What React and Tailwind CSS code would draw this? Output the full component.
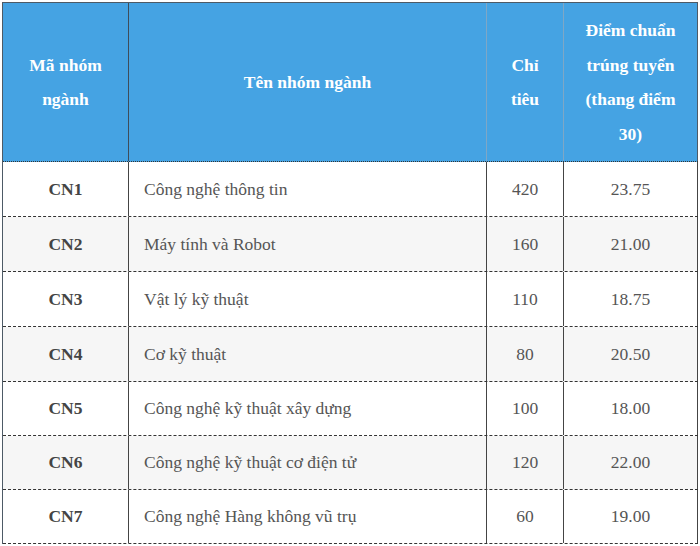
import React from "react";

const rows = [
  ["CN1", "Công nghệ thông tin", "420", "23.75", "h-[55px]", "bg-white"],
  ["CN2", "Máy tính và Robot", "160", "21.00", "h-[55px]", "bg-[#f6f6f6]"],
  ["CN3", "Vật lý kỹ thuật", "110", "18.75", "h-[55px]", "bg-white"],
  ["CN4", "Cơ kỹ thuật", "80", "20.50", "h-[55px]", "bg-[#f6f6f6]"],
  ["CN5", "Công nghệ kỹ thuật xây dựng", "100", "18.00", "h-[54px]", "bg-white"],
  ["CN6", "Công nghệ kỹ thuật cơ điện tử", "120", "22.00", "h-[54px]", "bg-[#f6f6f6]"],
  ["CN7", "Công nghệ Hàng không vũ trụ", "60", "19.00", "h-[54px]", "bg-white"],
];

export default function App() {
  return (
    <div className="bg-white w-[700px] h-[546px] pt-[2px] pl-[2px] font-['Liberation_Serif','Times_New_Roman',serif]">
      <div className="w-[696px] border-l border-t border-[#4d5a66]">
        <div className="flex h-[159px] bg-[#45a3e3] border-b border-dotted border-[#333] text-white font-bold text-[17.5px] leading-[34.5px] text-center">
          <div className="w-[126px] shrink-0 border-r border-[#3e4d5a] flex items-center justify-center">
            <div>Mã nhóm<br />ngành</div>
          </div>
          <div className="w-[358px] shrink-0 border-r border-[#7ea7c6] flex items-center justify-center">
            Tên nhóm ngành
          </div>
          <div className="w-[77px] shrink-0 border-r border-[#7ea7c6] flex items-center justify-center">
            <div>Chỉ<br />tiêu</div>
          </div>
          <div className="w-[134px] shrink-0 border-r border-[#4d5a66] flex items-center justify-center">
            <div>Điểm chuẩn<br />trúng tuyển<br />(thang điểm<br />30)</div>
          </div>
        </div>
        {rows.map(([code, name, quota, score, h, bg]) => (
          <div
            key={code}
            className={`flex ${h} ${bg} border-b border-dashed border-[#333] text-[17.5px] text-[#555]`}
          >
            <div className="w-[126px] shrink-0 border-r border-[#444] flex items-center justify-center font-bold text-[#444]">
              {code}
            </div>
            <div className="w-[358px] shrink-0 border-r border-[#444] flex items-center pl-[15px]">
              {name}
            </div>
            <div className="w-[77px] shrink-0 border-r border-[#444] flex items-center justify-center">
              {quota}
            </div>
            <div className="w-[134px] shrink-0 border-r border-[#444] flex items-center justify-center">
              {score}
            </div>
          </div>
        ))}
      </div>
    </div>
  );
}
